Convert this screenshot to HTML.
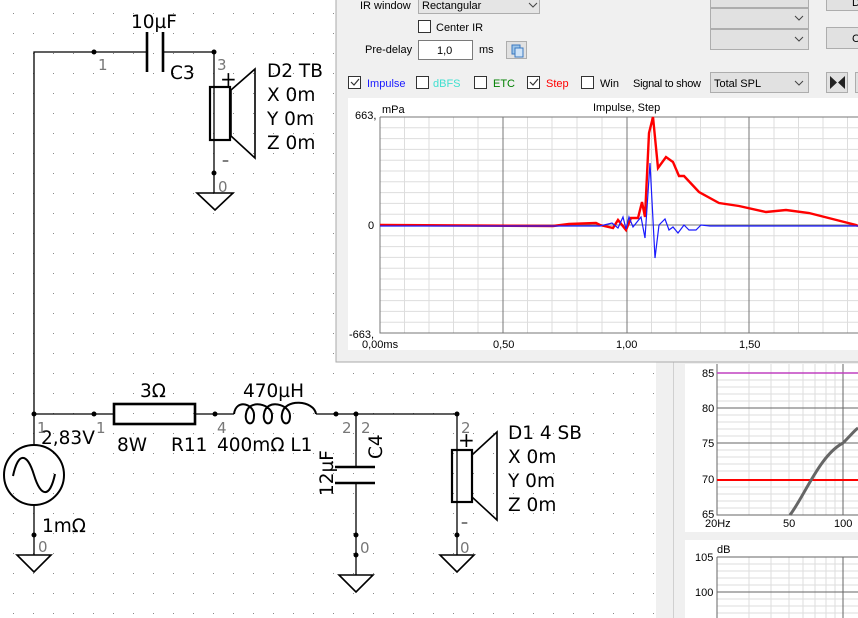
<!DOCTYPE html>
<html><head><meta charset="utf-8"><style>
html,body{margin:0;padding:0;width:858px;height:618px;overflow:hidden;background:#fff}
svg{display:block}
.ui{font-family:"Liberation Sans",sans-serif;font-size:11px;fill:#000}
.lbl{font-family:"DejaVu Sans","Liberation Sans",sans-serif;font-size:18.5px;fill:#000}
.pin{font-family:"DejaVu Sans","Liberation Sans",sans-serif;font-size:15px;fill:#777}
</style></head><body>
<svg width="858" height="618" viewBox="0 0 858 618" xmlns="http://www.w3.org/2000/svg">
<defs>
<pattern id="dots" x="0" y="0" width="20" height="20" patternUnits="userSpaceOnUse">
<rect x="13" y="13" width="1" height="1" fill="#888"/>
</pattern>
</defs>
<rect width="858" height="618" fill="#fff"/>
<rect width="656" height="618" fill="url(#dots)"/>

<!-- Schematic -->
<g stroke="#000" stroke-width="1.3" fill="none">
<polyline points="34,414 34,52 147,52"/>
<line x1="163" y1="52" x2="214" y2="52"/>
<line x1="214" y1="52" x2="214" y2="193"/>
<rect x="210" y="87" width="20" height="53" stroke-width="2.2"/>
<polygon points="231,90 255,69 255,158 231,136" stroke-width="1.6"/>
<polygon points="197,193 233,193 215,210" stroke-width="1.6"/>
<line x1="34" y1="414" x2="114" y2="414"/>
<rect x="114" y="404" width="81" height="20" stroke-width="2.6"/>
<line x1="195" y1="414" x2="234" y2="414"/>
<path d="M234,414 C236,398 255,404 254,416 C254,428 244,424 246,414 C248,398 273,404 272,416 C272,428 262,424 264,414 C266,398 290,404 290,416 C290,428 280,424 282,414 C284,398 314,400 316,414" stroke-width="2"/>
<line x1="316" y1="414" x2="457" y2="414"/>
<line x1="356" y1="414" x2="356" y2="467"/>
<line x1="335" y1="467" x2="375" y2="467" stroke-width="2.6"/>
<line x1="335" y1="483" x2="375" y2="483" stroke-width="2.6"/>
<line x1="356" y1="483" x2="356" y2="575"/>
<polygon points="339,575 373,575 356,592" stroke-width="1.6"/>
<line x1="457" y1="414" x2="457" y2="555"/>
<rect x="452" y="450" width="20" height="52" stroke-width="2.2"/>
<polygon points="472,455 497,432 497,520 472,497" stroke-width="1.6"/>
<polygon points="440,555 474,555 457,572" stroke-width="1.6"/>
<line x1="34" y1="414" x2="34" y2="445"/>
<circle cx="34" cy="475" r="30" stroke-width="2"/>
<path d="M13,476 C18,452 27,452 34,475 C41,498 50,498 55,474" stroke-width="2"/>
<line x1="34" y1="505" x2="34" y2="555"/>
<polygon points="17,555 51,555 34,572" stroke-width="1.6"/>
</g>
<g stroke="#000" stroke-width="2.6" fill="none">
<line x1="147" y1="32" x2="147" y2="72"/><line x1="163" y1="32" x2="163" y2="72"/>
</g>
<g fill="#000">
<circle cx="94" cy="52" r="2.5"/><circle cx="214" cy="52" r="2.5"/><circle cx="214" cy="173" r="2.5"/>
<circle cx="34" cy="414" r="2.5"/><circle cx="94" cy="414" r="2.5"/><circle cx="215" cy="414" r="2.5"/>
<circle cx="336" cy="414" r="2.5"/><circle cx="356" cy="414" r="2.5"/><circle cx="457" cy="414" r="2.5"/>
<circle cx="34" cy="535" r="2.5"/><circle cx="356" cy="535" r="2.5"/><circle cx="356" cy="555" r="2.5"/><circle cx="457" cy="535" r="2.5"/>
</g>
<g class="lbl">
<text x="131" y="28">10µF</text>
<text x="170" y="79">C3</text>
<text x="267" y="77">D2 TB</text>
<text x="267" y="101">X 0m</text>
<text x="267" y="125">Y 0m</text>
<text x="267" y="149">Z 0m</text>
<text x="140" y="397">3Ω</text>
<text x="243" y="397">470µH</text>
<text x="41" y="444">2,83V</text>
<text x="117" y="451">8W</text>
<text x="171" y="451">R11</text>
<text x="217" y="451">400mΩ L1</text>
<text x="42" y="532">1mΩ</text>
<text x="508" y="439">D1 4 SB</text>
<text x="508" y="463">X 0m</text>
<text x="508" y="487">Y 0m</text>
<text x="508" y="511">Z 0m</text>
<text transform="translate(333,496) rotate(-90)">12µF</text>
<text transform="translate(382,459) rotate(-90)">C4</text>
<text x="220" y="86" font-size="20">+</text><text x="222" y="165" font-size="14">–</text>
<text x="458" y="447" font-size="20">+</text><text x="461" y="527" font-size="14">–</text>
</g>
<g class="pin">
<text x="98" y="70">1</text><text x="217" y="70">3</text><text x="218" y="192">0</text>
<text x="37" y="433">1</text><text x="96" y="433">1</text><text x="217" y="433">4</text>
<text x="342" y="433">2</text><text x="361" y="433">2</text><text x="461" y="433">2</text>
<text x="38" y="552">0</text><text x="360" y="553">0</text><text x="460" y="553">0</text>
</g>

<!-- Right bottom panel -->
<rect x="656" y="362" width="202" height="256" fill="#f0f0f0"/>
<line x1="673.5" y1="362" x2="673.5" y2="618" stroke="#d0d0d0"/>
<rect x="685" y="364" width="173" height="168" fill="#fff"/>
<rect x="685" y="540" width="173" height="78" fill="#fff"/>
<g stroke="#ddd" stroke-width="1" fill="none">
<path d="M717,380H858M717,387H858M717,394H858M717,401H858M717,415H858M717,422H858M717,429H858M717,436H858M717,450H858M717,457H858M717,464H858M717,471H858M717,487H858M717,494H858M717,501H858M717,508H858"/>
<path d="M749,364V515M771,364V515M789,364V515M803,364V515M815,364V515M826,364V515M835,364V515"/>
<path d="M717,564H858M717,571H858M717,578H858M717,585H858M717,599H858M717,606H858M717,613H858"/>
<path d="M749,557V618M771,557V618M789,557V618M803,557V618M815,557V618M826,557V618M835,557V618"/>
</g>
<g stroke="#666" stroke-width="1" fill="none">
<path d="M717,408H858M717,443H858M843,364V515M717,364V515H858"/>
<path d="M717,557H858M717,592H858M843,557V618M717,557V618"/>
</g>
<line x1="717" y1="373" x2="858" y2="373" stroke="#c040c0" stroke-width="1.5"/>
<line x1="717" y1="480" x2="858" y2="480" stroke="#f00" stroke-width="2"/>
<path d="M790,515 C805,495 820,455 843,443 C850,436 855,430 858,428" stroke="#666" stroke-width="3" fill="none"/>
<g class="ui" font-size="11.5">
<text x="702" y="377">85</text><text x="702" y="412">80</text><text x="702" y="447">75</text><text x="702" y="483">70</text><text x="702" y="518">65</text>
<text x="705" y="527">20Hz</text><text x="783" y="527">50</text><text x="834" y="527">100</text>
<text x="695" y="561">105</text><text x="717" y="553">dB</text><text x="695" y="596">100</text>
</g>

<!-- Dialog -->
<rect x="336" y="-2" width="524" height="364" fill="#f0f0f0" stroke="#aaa"/>
<rect x="348" y="98" width="510" height="252" fill="#fff"/>
<text class="ui" x="360" y="9">IR window</text>
<rect x="418.5" y="-4.5" width="121" height="18" fill="#e5e5e5" stroke="#adadad"/>
<text class="ui" x="422" y="9">Rectangular</text>
<path d="M529,3l4,4l4,-4" stroke="#444" fill="none"/>
<rect x="418.5" y="20.5" width="12" height="12" fill="#fff" stroke="#333"/>
<text class="ui" x="436" y="31">Center IR</text>
<text class="ui" x="365" y="53">Pre-delay</text>
<rect x="418.5" y="40.5" width="54" height="19" fill="#fff" stroke="#7a7a7a"/>
<text class="ui" x="437" y="54">1,0</text>
<text class="ui" x="479" y="53">ms</text>
<rect x="506.5" y="41.5" width="20" height="17" fill="#e1e1e1" stroke="#adadad"/>
<rect x="512" y="45" width="8" height="9" fill="#9cc4e8" stroke="#3a78c0"/><rect x="515" y="48" width="8" height="9" fill="#cfe3f7" stroke="#3a78c0"/>
<g fill="#e1e1e1" stroke="#adadad">
<rect x="710.5" y="-4.5" width="98" height="12"/>
<rect x="710.5" y="8.5" width="98" height="20"/>
<rect x="710.5" y="29.5" width="98" height="20"/>
<rect x="826.5" y="-4.5" width="40" height="15"/>
<rect x="826.5" y="27.5" width="40" height="21"/>
<rect x="710.5" y="72.5" width="98" height="20"/>
<rect x="826.5" y="72.5" width="21" height="20"/>
<rect x="855.5" y="72.5" width="10" height="20"/>
</g>
<path d="M795,16l4,4l4,-4M795,37l4,4l4,-4M795,81l4,4l4,-4" stroke="#444" fill="none"/>
<text class="ui" x="852" y="6">D</text><text class="ui" x="852" y="42">C</text>
<path d="M830,76v13l7,-6.5zM845,76v13l-7,-6.5z" fill="#222"/>
<text class="ui" x="714" y="87">Total SPL</text>
<g fill="#fff" stroke="#333">
<rect x="348.5" y="76.5" width="12" height="12"/><rect x="416.5" y="76.5" width="12" height="12"/><rect x="474.5" y="76.5" width="12" height="12"/><rect x="527.5" y="76.5" width="12" height="12"/><rect x="581.5" y="76.5" width="12" height="12"/>
</g>
<path d="M351,82l3,3l5,-6M530,82l3,3l5,-6" stroke="#333" fill="none" stroke-width="1.2"/>
<text class="ui" x="367" y="87" style="fill:#1a1aff">Impulse</text>
<text class="ui" x="433" y="87" style="fill:#40e0d0">dBFS</text>
<text class="ui" x="493" y="87" style="fill:#008000">ETC</text>
<text class="ui" x="546" y="87" style="fill:#f00">Step</text>
<text class="ui" x="600" y="87">Win</text>
<text class="ui" x="633" y="87" textLength="68">Signal to show</text>

<!-- Plot grid -->
<g stroke="#ddd" stroke-width="1" fill="none">
<path d="M380,127.8H858M380,138.6H858M380,149.4H858M380,160.2H858M380,171H858M380,181.8H858M380,192.6H858M380,203.4H858M380,214.2H858M380,235.8H858M380,246.6H858M380,257.4H858M380,268.2H858M380,279H858M380,289.8H858M380,300.6H858M380,311.4H858M380,322.2H858"/>
<path d="M404.5,117V333M429,117V333M453.5,117V333M478,117V333M527.5,117V333M552,117V333M577,117V333M602,117V333M651.5,117V333M676,117V333M700.5,117V333M725,117V333M774,117V333M798.5,117V333M823,117V333M847.5,117V333"/>
</g>
<g stroke="#777" stroke-width="1" fill="none">
<path d="M380,117H858M380,117V333H858M503,117V333M627,117V333M749,117V333M380,225H858"/>
</g>
<polyline fill="none" stroke="#f00" stroke-width="2.4" points="380,225 553,226 569,224 596,223 600,225 613,228 618,220 626,230 631,218 638,218 642,202 645,217 649,133 653,117 658,168 666,157 673,162 679,176 684,176 699,192 719,203 739,206 766,212 786,210 809,213 856,225 858,226"/>
<polyline fill="none" stroke="#1a1aff" stroke-width="1.2" points="380,226 600,226 612,223 618,228 623,217 626,229 629,217 633,227 641,217 645,238 650,163 655,258 659,225 665,219 669,230 673,227 678,233 684,225 689,230 696,230 701,225 710,226 858,226"/>
<g class="ui" font-size="11.5">
<text x="355" y="119">663,</text><text x="382" y="113">mPa</text>
<text x="593" y="111">Impulse, Step</text>
<text x="368" y="229">0</text>
<text x="349" y="338">-663,</text>
<text x="362" y="348">0,00ms</text>
<text x="493" y="348">0,50</text><text x="616" y="348">1,00</text><text x="739" y="348">1,50</text>
</g>
</svg>
</body></html>
